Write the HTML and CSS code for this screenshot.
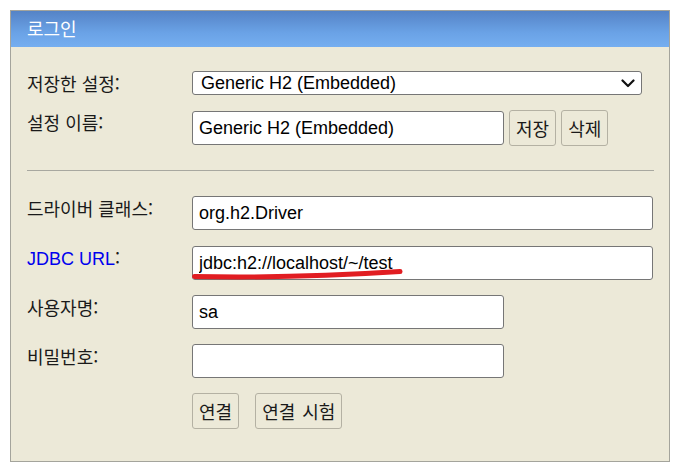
FILE: index.html
```html
<!DOCTYPE html>
<html lang="ko">
<head>
<meta charset="utf-8">
<title>로그인</title>
<link rel="stylesheet" href="styles.css">
</head>
<body>
<div class="login">
  <div class="login-head">로그인</div>
  <div class="login-body">
    <div class="grid">
      <div class="label label-mid">저장한 설정:</div>
      <div class="field">
        <div class="select">
          <span>Generic H2 (Embedded)</span>
          <svg class="chev" width="14" height="9" viewBox="0 0 14 9"><polyline points="1.5,1.5 7,7 12.5,1.5" fill="none" stroke="#111" stroke-width="2.2" stroke-linecap="round" stroke-linejoin="round"/></svg>
        </div>
      </div>

      <div class="label">설정 이름:</div>
      <div class="field field-row">
        <input class="input input-md" type="text" value="Generic H2 (Embedded)">
        <button class="btn btn-save">저장</button>
        <button class="btn">삭제</button>
      </div>
    </div>

    <div class="sep"></div>

    <div class="grid">
      <div class="label">드라이버 클래스:</div>
      <div class="field"><input class="input input-full" type="text" value="org.h2.Driver"></div>

      <div class="label"><span class="link">JDBC URL</span>:</div>
      <div class="field field-url">
        <input class="input input-full" type="text" value="jdbc:h2://localhost/~/test">
        <svg class="mark" width="220" height="14" viewBox="0 0 220 14"><path d="M2.5 9.5 Q 100 11.5 208 4.5" fill="none" stroke="#e11d22" stroke-width="5" stroke-linecap="round"/></svg>
      </div>

      <div class="label">사용자명:</div>
      <div class="field"><input class="input input-md" type="text" value="sa"></div>

      <div class="label">비밀번호:</div>
      <div class="field"><input class="input input-md" type="password" value=""></div>

      <div class="label"></div>
      <div class="field field-btns">
        <button class="btn">연결</button>
        <button class="btn">연결 시험</button>
      </div>
    </div>
  </div>
</div>
</body>
</html>
```
FILE: styles.css
```css
html, body {
  margin: 0;
  padding: 0;
  background: #ffffff;
}
body {
  padding: 10px;
  font-family: "Noto Sans CJK KR", "Liberation Sans", sans-serif;
  font-size: 18px;
  color: #1a1a1a;
}
.login {
  width: 658px;
  height: 450px;
  border: 1px solid #a4a49c;
  background: #ece9d8;
  display: flex;
  flex-direction: column;
}
.login-head {
  height: 36px;
  background: linear-gradient(#5583c6 0%, #6aa2e6 60%, #75aef0 100%);
  color: #ffffff;
  font-size: 18px;
  line-height: 35px;
  padding-left: 16px;
}
.login-body {
  padding: 24px 15px 0 16px;
}
.grid {
  display: grid;
  grid-template-columns: 165px 1fr;
  row-gap: 15px;
  align-items: start;
}
.label {
  font-size: 18px;
  line-height: 22px;
  padding-top: 1px;
  white-space: nowrap;
}
.label-mid {
  align-self: center;
  padding-top: 0;
}
.link {
  color: #0000ee;
  font-family: "Liberation Sans", sans-serif;
  font-size: 18px;
}
.field {
  display: flex;
  align-items: center;
}
.field-row {
  gap: 5px;
}
.field-url {
  position: relative;
  margin-top: 1px;
}
.field-btns {
  gap: 16px;
}
.select {
  box-sizing: border-box;
  width: 450px;
  height: 24px;
  border: 1px solid #767676;
  border-radius: 3px;
  background: #ffffff;
  display: flex;
  align-items: center;
  justify-content: space-between;
  padding: 0 6px 0 8px;
  font-family: "Liberation Sans", sans-serif;
  font-size: 18px;
  color: #000;
}
.chev {
  display: block;
}
.input {
  box-sizing: border-box;
  height: 34px;
  border: 1px solid #767676;
  border-radius: 3px;
  background: #ffffff;
  padding: 0 6px;
  margin: 0;
  font-family: "Liberation Sans", sans-serif;
  font-size: 18px;
  color: #000;
  outline: none;
}
.input-md {
  width: 312px;
}
.input-full {
  width: 461px;
}
.btn {
  box-sizing: border-box;
  height: 36px;
  padding: 0 6px;
  margin: 0;
  border: 1px solid #b4b1a3;
  border-radius: 3px;
  background: transparent;
  font-family: "Noto Sans CJK KR", sans-serif;
  font-size: 18px;
  word-spacing: 2px;
  color: #1a1a1a;
}
.sep {
  height: 1px;
  background: #a8a8a0;
  margin: 24px 0 25px;
}
.mark {
  position: absolute;
  left: 0;
  top: 21px;
}
```
